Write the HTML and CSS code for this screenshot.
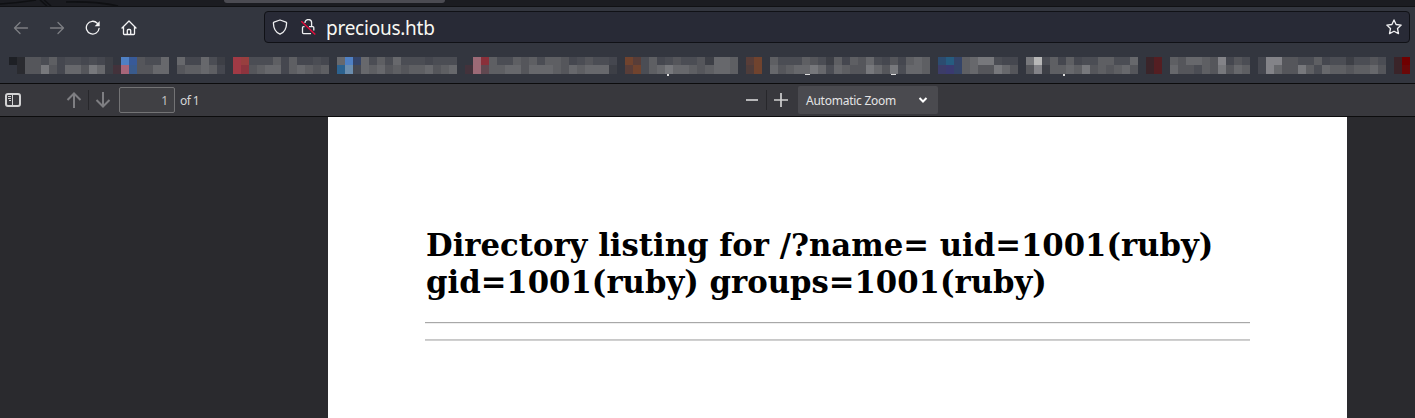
FILE: index.html
```
<!DOCTYPE html>
<html lang="en">
<head>
<meta charset="utf-8">
<title>precious.htb</title>
<link rel="stylesheet" href="styles.css">
</head>
<body>
<div class="browser">
  <div class="tabs">
    <svg class="tab-art" width="150" height="6" viewBox="0 0 150 6"><path d="M0 4Q18 3 36 0M40 0l7 6M44 0l7 6M66 2Q96 1 118 6" fill="none" stroke="#0f1013" stroke-width="1.6"/></svg>
    <div class="tab"></div>
  </div>
  <div class="nav">
    <svg class="nav-icon dim" viewBox="0 0 16 16"><path d="M14.500 8H1.500M7 2.500L1.500 8l5.500 5.500"/></svg>
    <svg class="nav-icon dim" viewBox="0 0 16 16"><path d="M1.500 8h13M9 2.500L14.500 8l-5.500 5.500"/></svg>
    <svg class="nav-icon" viewBox="0 0 16 16"><path d="M12.300 3.200A6.400 6.400 0 1 0 14.100 8.300"/><path class="solid" d="M14.700 1v5.300h-5z"/></svg>
    <svg class="nav-icon" viewBox="0 0 16 16"><path d="M1 8L8 1l7 7M2.500 7v6.700q0 .8.8.8h9.400q.8 0 .8-.8V7M6.300 14.300V10.500q0-1 1-1h1.400q1 0 1 1v3.800"/></svg>
    <div class="url">
      <svg class="url-icon" viewBox="0 0 16 16"><path d="M8 1L14 3.200q.6.200.6.900C14.500 9.500 12.500 13.500 8 15.200C3.500 13.500 1.500 9.500 1.400 4.100q0-.7.6-.9z"/></svg>
      <svg class="url-icon" viewBox="0 0 16 16"><path d="M5 4V3.800a3.300 3.300 0 0 1 6.600 0V7.600M9 7.600h3.800q1 0 1 1v3M11 14.600H3.500q-1 0-1-1v-5q0-1 1-1h1"/><path class="slash" d="M1.300 2.200l14 13.300"/></svg>
      <span class="address">precious.htb</span>
      <svg class="url-icon star" viewBox="0 0 16 16"><path d="M8 .9l2.100 4.600 5.100.6-3.700 3.400 1 5.100L8 12.200l-4.500 2.400 1-5.100L.8 6.100l5.100-.6z"/></svg>
    </div>
  </div>
  <svg class="bookmarks" id="bookmarks" width="1415" height="33"></svg>
  <div class="viewer-bar">
    <svg class="side-toggle" viewBox="0 0 16 14"><rect x="1" y="1" width="14" height="12" rx="2" class="frame"/><path d="M7.500 1v12" class="rule"/><path d="M3 3.500h3M3 5.500h3M4 7.500h2" class="rule"/></svg>
    <svg class="page-arrow up" viewBox="0 0 16 16"><path d="M8 16V1.500M1.500 8L8 1.500 14.500 8"/></svg>
    <i class="sep"></i>
    <svg class="page-arrow down" viewBox="0 0 16 16"><path d="M8 0v14.500M1.500 8L8 14.500 14.500 8"/></svg>
    <div class="page-no">1</div>
    <span class="page-count">of 1</span>
    <svg class="zoom-out" viewBox="0 0 14 14"><path d="M1 7h12"/></svg>
    <i class="sep"></i>
    <svg class="zoom-in" viewBox="0 0 14 14"><path d="M0 7h14M7 0v14"/></svg>
    <div class="scale"><span>Automatic Zoom</span><svg viewBox="0 0 10 8"><path d="M1.500 2L5 5.500 8.500 2"/></svg></div>
  </div>
  <div class="viewer">
    <div class="page">
      <h1>Directory listing for /?name= uid=1001(ruby) gid=1001(ruby) groups=1001(ruby)</h1>
      <hr>
      <hr class="second">
    </div>
  </div>
</div>
<script src="mosaic.js"></script>
</body>
</html>
```
FILE: styles.css
```
body { margin: 0; background: #2a2a2e; }
.browser { display: flex; flex-direction: column; width: 1415px; height: 418px; overflow: hidden; font-family: "Noto Sans", sans-serif; }
.tabs { display: flex; height: 6px; background: #1b1c21; border-bottom: 1px solid #101114; }
.tab-art { flex: none; margin-right: 74px; }
.tab { width: 221px; height: 3px; background: #4b4b52; border-radius: 0 0 4px 4px; }
.nav { display: flex; align-items: center; height: 43px; background: #33363f; box-sizing: border-box; padding: 0 5px 3px 13px; }
.nav-icon { flex: none; width: 16px; height: 16px; margin: 2px 20px 0 0; fill: none; stroke: #f4f4f5; stroke-width: 1.3; stroke-linejoin: round; stroke-linecap: round; }
.nav-icon.dim { stroke: #7d7e83; }
.nav-icon .solid { fill: #f4f4f5; stroke: none; }
.url { display: flex; align-items: center; box-sizing: border-box; width: 1147px; height: 32px; margin: 0 0 0 107px; padding: 0 7px; background: #282a36; border: 1px solid #101116; border-radius: 4px; }
.url-icon { flex: none; width: 16px; height: 16px; margin-right: 12px; fill: none; stroke: #f0f0f2; stroke-width: 1.3; stroke-linejoin: round; }
.url-icon .slash { stroke: #e20d3c; stroke-width: 1.500; }
.url-icon.star { margin: 0 0 0 auto; }
.address { padding-top: 2px; font-size: 19px; line-height: 28px; letter-spacing: -.25px; color: #f8f8f2; margin-left: -2px; }
.bookmarks { display: block; flex: none; height: 33px; background: #33363f; }
.viewer-bar { display: flex; flex: none; align-items: center; box-sizing: border-box; height: 34px; padding-left: 5px; background: #38383d; border-top: 1px solid #0c0c0d; border-bottom: 1px solid #0c0c0d; }
.viewer-bar svg { flex: none; fill: none; }
.side-toggle { width: 16px; height: 14px; margin-right: 45px; }
.side-toggle .frame { stroke: #d2d2d3; stroke-width: 2; }
.side-toggle .rule { stroke: #d2d2d3; stroke-width: 1; }
.page-arrow { width: 16px; height: 16px; stroke: #7e7e82; stroke-width: 2; }
.page-arrow.up { margin-right: 6px; }
.page-arrow.down { margin: 0 8px 0 6px; }
.sep { flex: none; width: 1px; height: 20px; background: #27272b; }
.page-no { box-sizing: border-box; width: 56px; height: 26px; padding-right: 6px; border: 1px solid #737375; border-radius: 2px; background: #404044; color: #c0c0c2; font-size: 12px; line-height: 26px; text-align: right; }
.page-count { width: 565px; padding: 1px 0 0 5px; color: #d5d5d6; font-size: 12px; line-height: 20px; letter-spacing: -.6px; }
.zoom-out, .zoom-in { width: 14px; height: 14px; stroke: #cfcfd0; stroke-width: 1.700; }
.zoom-out { margin-right: 7px; }
.zoom-in { margin: 0 10px 0 7px; }
.scale { display: flex; align-items: center; justify-content: space-between; box-sizing: border-box; width: 140px; height: 28px; padding: 0 10px 0 8px; background: #4a4a4f; border-radius: 2px; color: #e4e4e5; font-size: 12px; letter-spacing: -.25px; }
.scale svg { width: 10px; height: 8px; stroke: #fff; stroke-width: 2; }
.viewer { flex: 1; display: flex; background: #2a2a2e; }
.page { box-sizing: border-box; width: 1019px; margin-left: 328px; padding: 110px 97px 0; background: #fff; }
.page h1 { box-sizing: border-box; width: 825px; margin: 0; padding-left: 1px; color: #000; font: bold 30.72px/37px "DejaVu Serif", serif; }
.page hr { height: 0; margin: 21px 0 0; border: 0; border-top: 1px solid #a8a8a8; border-bottom: 1px solid #eee; }
.page hr.second { margin-top: 15px; border-top-color: #c8c8c8; border-bottom-color: #d0d0d0; }
```
FILE: mosaic.js
```
// Pixelated bookmark labels: one character per cell, two rows of cells.
const palette = {
  1: "#3d3f46", 2: "#45474f", 3: "#4b4d54", 4: "#55565b", 5: "#5e5f63", 6: "#67686c", 7: "#77787c", 8: "#838388", 9: "#b8b8b8",
  a: "#1e2025", b: "#2a2b30", c: "#4f80c4", d: "#385a98", e: "#a8667a", f: "#3a5b8c", g: "#a03a45", h: "#983f3f", i: "#8c343e",
  j: "#2c628f", k: "#6b8dae", l: "#344468", m: "#9c6a76", n: "#8a303a", o: "#604850", p: "#70432e", q: "#583d38", r: "#4e3c3a",
  s: "#2c4c70", t: "#265c80", u: "#3c3c68", v: "#3a3a70", w: "#3a2429", x: "#541e22", y: "#700000", z: "#6a0808", A: "#43323b"
};
const groups = [
  [9, "ab44352332321", " b44742664761A"],
  [121, "cd4336 622631", "ef4466 455652"],
  [233, "gh3335252232", "gi4566256545"],
  [337, "6cl635363332333", "jk2656454556456"],
  [465, " mn5335453554234332", "Amo5566466654656661"],
  [625, "pq35234334", "qp35676654"],
  [714, "665", "665"],
  [746, "qp 53335431525463242565", "rp 64566763654476473665"],
  [938, "stl5677322", "uvl5644764"],
  [1026, "79352523355336", "48155657454564"],
  [1146, "wx 5466548243", "wx 6443547465"],
  [1258, "2884433523313343", "2864475365545564"],
  [1394, "wy", "wz"]
];
const root = document.getElementById("bookmarks");
function rect(x, y, w, h, fill) {
  const r = document.createElementNS("http://www.w3.org/2000/svg", "rect");
  Object.entries({ x, y, width: w, height: h, fill }).forEach(([k, v]) => r.setAttribute(k, v));
  root.appendChild(r);
}
groups.forEach(([x, top, bottom]) => {
  [...top].forEach((c, i) => palette[c] && rect(x + i * 8, 7, 8, 8, palette[c]));
  [...bottom].forEach((c, i) => palette[c] && rect(x + i * 8, 15, 8, 9, palette[c]));
});
rect(705, 7, 9, 8, palette[1]);
rect(705, 15, 9, 9, palette[5]);
// Letter descenders that show below the cells.
[[667, 24, 2, 2], [805, 24, 5, 1], [891, 24, 5, 1], [1063, 24, 2, 2]].forEach(([x, y, w, h]) => rect(x, y, w, h, "#dcdcdd"));
```
